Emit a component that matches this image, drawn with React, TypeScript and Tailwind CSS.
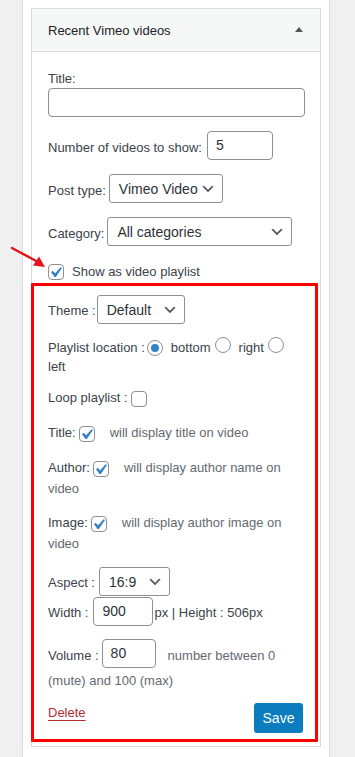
import React from "react";

const font = { fontFamily: "'Liberation Sans', Arial, sans-serif" };

function Check({ checked }: { checked?: boolean }) {
  return (
    <span className="relative inline-block w-[16px] h-[16px] shrink-0 rounded-[4px] border border-[#8c8f94] bg-white align-middle">
      {checked && (
        <svg viewBox="0 0 20 20" className="absolute left-[-4px] top-[-3px] w-[21px] h-[21px]">
          <path d="M14.83 4.89l1.34.94-5.81 8.38H9.02L5.78 9.67l1.34-1.25 2.57 2.4z" fill="#3582c4" />
        </svg>
      )}
    </span>
  );
}

function Radio({ checked }: { checked?: boolean }) {
  return (
    <span className="inline-flex items-center justify-center w-[16px] h-[16px] shrink-0 rounded-full border border-[#8c8f94] bg-white">
      {checked && <span className="block w-[8px] h-[8px] rounded-full bg-[#3582c4]" />}
    </span>
  );
}

function Chevron() {
  return (
    <svg viewBox="0 0 20 20" className="w-[16px] h-[16px] shrink-0">
      <path d="M5 6l5 5 5-5 2 1-7 7-7-7 2-1z" fill="#555" />
    </svg>
  );
}

function Select({ value, w }: { value: string; w: string }) {
  return (
    <div className={`flex items-center justify-between h-[29px] rounded-[3px] border border-[#8c8f94] bg-white pl-[9px] pr-[6px] text-[14px] text-[#2c3338] ${w}`}>
      <span>{value}</span>
      <Chevron />
    </div>
  );
}

function Input({ value, w }: { value?: string; w: string }) {
  return (
    <div className={`flex items-center h-[29px] rounded-[4px] border border-[#8c8f94] bg-white pl-[8px] pb-[2px] text-[14px] text-[#2c3338] ${w}`}>
      {value}
    </div>
  );
}

export default function App() {
  return (
    <div className="relative w-[355px] h-[757px] overflow-hidden bg-[#f0f0f1] text-[13px] leading-[20px] text-[#3c434a]" style={font}>
      <div className="ml-[22px] w-[308px] h-[757px] bg-white border-x border-[#dcdcde] pl-[8px] pt-[8px]">
        <div className="w-[290px] border border-[#dcdcde]">
          {/* header */}
          <div className="flex items-center justify-between h-[43px] bg-[#f6f7f7] border-b border-[#dcdcde] pl-[16px] pr-[17px]">
            <span className="text-[#1d2327] text-[13px] mt-[1px]">Recent Vimeo videos</span>
            <svg viewBox="0 0 8 5" className="w-[8px] h-[5px] mt-[-2px]">
              <path d="M0 5 L4 0 L8 5 Z" fill="#50575e" />
            </svg>
          </div>
          {/* body */}
          <div className="pl-[16px] pr-[15px] pb-[4px]">
            <div className="mt-[18px] leading-[18px]">Title:</div>
            <Input w="w-[257px]" />
            <div className="mt-[14px] flex items-center">
              <span className="mt-[4px]">Number of videos to show:</span>
              <div className="ml-[5px]"><Input value="5" w="w-[66px]" /></div>
            </div>
            <div className="mt-[14px] flex items-center">
              <span className="mt-[4px]">Post type:</span>
              <div className="ml-[3px]"><Select value="Vimeo Video" w="w-[114px]" /></div>
            </div>
            <div className="mt-[14px] flex items-center">
              <span className="mt-[4px]">Category:</span>
              <div className="ml-[3px]"><Select value="All categories" w="w-[185px]" /></div>
            </div>
            <div className="mt-[18px] flex items-center h-[16px]">
              <Check checked />
              <span className="ml-[8px]">Show as video playlist</span>
            </div>
            {/* red box */}
            <div className="mt-[3px] ml-[-17px] w-[287px] border-[3px] border-[#ff0000] rounded-[1px] pl-[14px] pr-[10px] pt-[9px] pb-[6px]">
              <div className="flex items-center">
                <span className="mt-[2px]">Theme :</span>
                <div className="ml-[1px]"><Select value="Default" w="w-[88px]" /></div>
              </div>
              <div className="mt-[14px] leading-[19px]">
                <div className="flex items-center h-[19px]">
                  <span>Playlist location :</span>
                  <span className="ml-[2px]"><Radio checked /></span>
                  <span className="ml-[8px]">bottom</span>
                  <span className="ml-[4px]"><Radio /></span>
                  <span className="ml-[8px]">right</span>
                  <span className="ml-[4px]"><Radio /></span>
                </div>
                <div>left</div>
              </div>
              <div className="mt-[12px] flex items-center h-[20px]">
                <span>Loop playlist :</span>
                <span className="ml-[3px]"><Check /></span>
              </div>
              <div className="mt-[15px] flex items-center h-[20px]">
                <span>Title:</span>
                <span className="ml-[3px]"><Check checked /></span>
                <span className="ml-[15px] text-[#646970]">will display title on video</span>
              </div>
              <div className="mt-[14px] leading-[21px]">
                <div className="flex items-center h-[21px]">
                  <span>Author:</span>
                  <span className="ml-[3px]"><Check checked /></span>
                  <span className="ml-[15px] text-[#646970]">will display author name on</span>
                </div>
                <div className="text-[#646970]">video</div>
              </div>
              <div className="mt-[13px] leading-[21px]">
                <div className="flex items-center h-[21px]">
                  <span>Image:</span>
                  <span className="ml-[3px]"><Check checked /></span>
                  <span className="ml-[15px] text-[#646970]">will display author image on</span>
                </div>
                <div className="text-[#646970]">video</div>
              </div>
              <div className="mt-[13px] flex items-center">
                <span className="mt-[3px]">Aspect :</span>
                <div className="ml-[4px]"><Select value="16:9" w="w-[71px]" /></div>
              </div>
              <div className="mt-[1px] flex items-center">
                <span className="mt-[3px]">Width :</span>
                <div className="ml-[5px]"><Input value="900" w="w-[60px]" /></div>
                <span className="mt-[2px] ml-[1px]">px | Height : 506px</span>
              </div>
              <div className="mt-[13px] flex items-start">
                <span className="mt-[7px]">Volume :</span>
                <div className="ml-[3px]"><Input value="80" w="w-[54px]" /></div>
                <span className="mt-[7px] ml-[12px] text-[#646970]">number between 0</span>
              </div>
              <div className="mt-[3px] text-[#646970]">(mute) and 100 (max)</div>
              <div className="mt-[12px] flex items-start justify-between pr-[2px]">
                <span className="text-[#b32d2e] underline underline-offset-[3px]">Delete</span>
                <div className="flex items-center justify-center h-[30px] w-[49px] rounded-[3px] bg-[#0b7dbe] text-[14px] text-white">Save</div>
              </div>
            </div>
          </div>
        </div>
      </div>
      {/* annotation arrow */}
      <svg className="absolute left-[8px] top-[244px] w-[42px] h-[30px]" viewBox="0 0 42 30">
        <line x1="4" y1="4" x2="30" y2="18" stroke="#e8141c" strokeWidth="2.5" strokeLinecap="round" />
        <path d="M37 23 L25 21.5 L31 12.5 Z" fill="#e8141c" />
      </svg>
    </div>
  );
}
